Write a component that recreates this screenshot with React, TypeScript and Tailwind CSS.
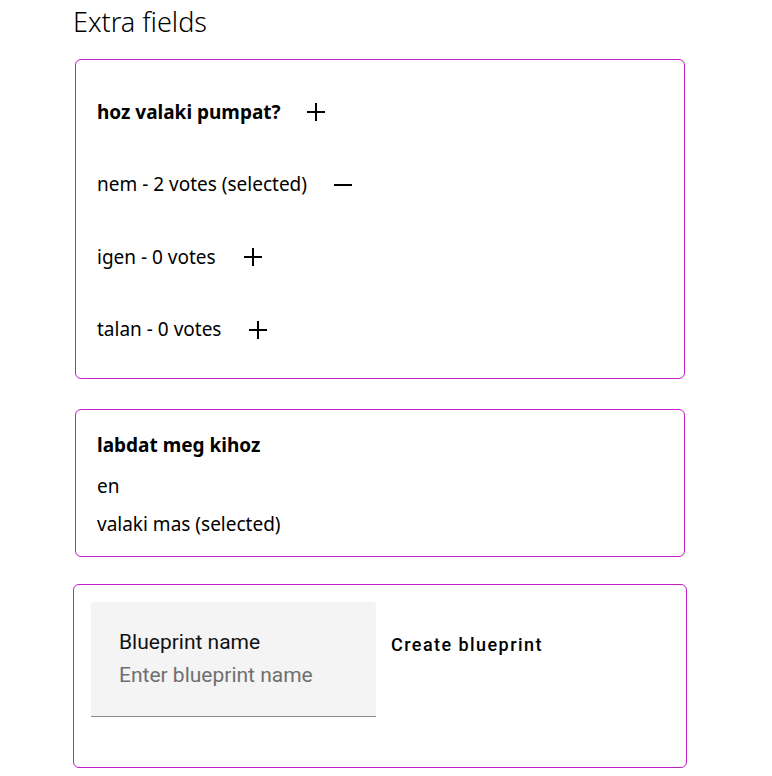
import React from "react";

const Plus = () => (
  <svg width="18" height="18" viewBox="0 0 18 18" className="block">
    <path d="M9 0v18M0 9h18" stroke="#000" strokeWidth="2" fill="none" />
  </svg>
);
const Minus = () => (
  <svg width="18" height="18" viewBox="0 0 18 18" className="block">
    <path d="M0 9h18" stroke="#000" strokeWidth="2" fill="none" />
  </svg>
);

const seg = { fontFamily: '"Noto Sans", "Open Sans", sans-serif' };
const rob = { fontFamily: 'Roboto, "Noto Sans", sans-serif' };

export default function App() {
  return (
    <div className="w-[772px] h-[776px] bg-white text-black overflow-hidden" style={seg}>
      <div className="pl-[73px] pr-[85px]">
        <h2 className="text-[27px] font-light leading-[44px] mt-0">Extra fields</h2>
        <div className="mt-[15px] mx-[2px] border border-[#c020c8] rounded-[6px] pl-[21px] pt-[43px] pb-[39px]">
          <div className="flex flex-col gap-[54.5px] text-[19px]">
            <div className="flex items-center h-[18px] gap-[26px]">
              <span className="font-bold">hoz valaki pumpat?</span>
              <Plus />
            </div>
            <div className="flex items-center h-[18px] gap-[27px]">
              <span>nem - 2 votes (selected)</span>
              <Minus />
            </div>
            <div className="flex items-center h-[18px] gap-[28px]">
              <span>igen - 0 votes</span>
              <Plus />
            </div>
            <div className="flex items-center h-[18px] gap-[28px]">
              <span>talan - 0 votes</span>
              <Plus />
            </div>
          </div>
        </div>
        <div className="mt-[30px] mx-[2px] border border-[#c020c8] rounded-[6px] pl-[21px] pt-[20px] pb-[18px] text-[19px]">
          <div className="font-bold leading-[30px]">labdat meg kihoz</div>
          <div className="leading-[28px] mt-[12px]">en</div>
          <div className="leading-[28px] mt-[10px]">valaki mas (selected)</div>
        </div>
        <div className="mt-[27px] border border-[#c020c8] rounded-[6px] pl-[17px] pt-[17px] h-[184px] flex items-start gap-[15px]">
          <div className="w-[285px] h-[115px] bg-[#f4f4f4] rounded-t-[4px] border-b border-[#8c8c8c] pl-[28px] pt-[26px]" style={rob}>
            <div className="text-[21px] leading-[28px] text-[#111]">Blueprint name</div>
            <div className="text-[21px] leading-[28px] mt-[5px] text-[#6f6f6f]">Enter blueprint name</div>
          </div>
          <div className="pt-[31px] text-[18px] font-medium tracking-[0.08em] leading-[24px]" style={rob}>
            Create blueprint
          </div>
        </div>
      </div>
    </div>
  );
}
